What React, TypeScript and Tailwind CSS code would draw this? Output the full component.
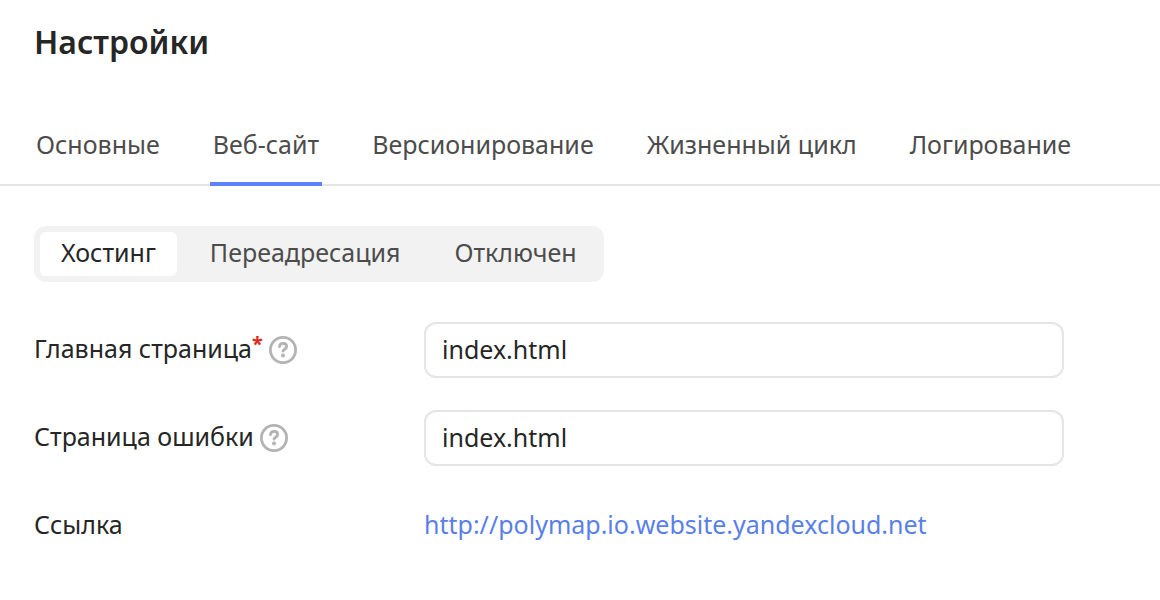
import { useState } from 'react';

const tabs = ['Основные', 'Веб-сайт', 'Версионирование', 'Жизненный цикл', 'Логирование'];
const modes = ['Хостинг', 'Переадресация', 'Отключен'];

function HelpButton({ label }: { label: string }) {
  return (
    <button type="button" aria-label={label} className="flex size-7 shrink-0 text-[#b3b3b3]">
      <svg viewBox="0 0 28 28" className="size-7" fill="none" stroke="currentColor" strokeWidth="2.8" strokeLinecap="round" strokeLinejoin="round" aria-hidden="true">
        <circle cx="14" cy="14" r="12.6" />
        <path d="M10.5 10.6c.2-2 1.6-3.2 3.6-3.2s3.5 1.2 3.5 3c0 1.4-.8 2.1-1.9 2.8-1 .7-1.6 1.1-1.7 2" strokeWidth="2.8" />
        <circle cx="14" cy="19.5" r="2" fill="currentColor" stroke="none" />
      </svg>
    </button>
  );
}

function Field({ id, label, required = false }: { id: string; label: string; required?: boolean }) {
  const [value, setValue] = useState('index.html');
  return (
    <div className="flex items-center">
      <div className="flex w-[390px] shrink-0 items-center gap-1.5">
        <label htmlFor={id} className="flex pb-1 whitespace-nowrap">
          {label}
          {required && <span className="text-xl leading-7 font-bold text-[#e0281b]">*</span>}
        </label>
        <HelpButton label={label} />
      </div>
      <input
        id={id}
        value={value}
        onChange={(e) => setValue(e.target.value)}
        className="h-14 min-w-0 max-w-[640px] flex-1 rounded-xl border-2 border-[#e5e5e5] bg-white px-4 pb-0.5 outline-none focus:border-[#b3b3b3]"
      />
    </div>
  );
}

export default function App() {
  const [tab, setTab] = useState('Веб-сайт');
  const [mode, setMode] = useState('Хостинг');
  return (
    <main className="min-h-screen bg-white font-['Noto_Sans',sans-serif] text-[25px] leading-9 text-[#262626]">
      <h1 className="px-[34px] pt-5 text-[32px] leading-11 font-semibold">Настройки</h1>
      <nav className="mt-10 flex gap-[47px] border-b-2 border-[#e5e5e5] px-[33px]">
        {tabs.map((t) => (
          <button
            key={t}
            type="button"
            onClick={() => setTab(t)}
            className={`-mb-0.5 border-b-4 px-[3px] pt-[22px] pb-5 whitespace-nowrap text-[#4c4c4c] ${t === tab ? 'border-[#5c83fb]' : 'border-transparent'}`}
          >
            {t}
          </button>
        ))}
      </nav>
      <section className="px-[34px] pt-10">
        <div className="flex w-fit gap-3 rounded-xl bg-[#f2f2f2] p-1.5">
          {modes.map((m) => (
            <button
              key={m}
              type="button"
              onClick={() => setMode(m)}
              className={`h-11 rounded-md px-[21px] pb-1 ${m === mode ? 'bg-white text-[#262626]' : 'text-[#4c4c4c]'}`}
            >
              {m}
            </button>
          ))}
        </div>
        <div className="mt-10 flex flex-col gap-8">
          <Field id="main-page" label="Главная страница" required />
          <Field id="error-page" label="Страница ошибки" />
          <div className="flex h-14 items-center pb-1">
            <span className="w-[390px] shrink-0">Ссылка</span>
            <a href="http://polymap.io.website.yandexcloud.net" className="text-[#5a7fe8]">
              http://polymap.io.website.yandexcloud.net
            </a>
          </div>
        </div>
      </section>
    </main>
  );
}
